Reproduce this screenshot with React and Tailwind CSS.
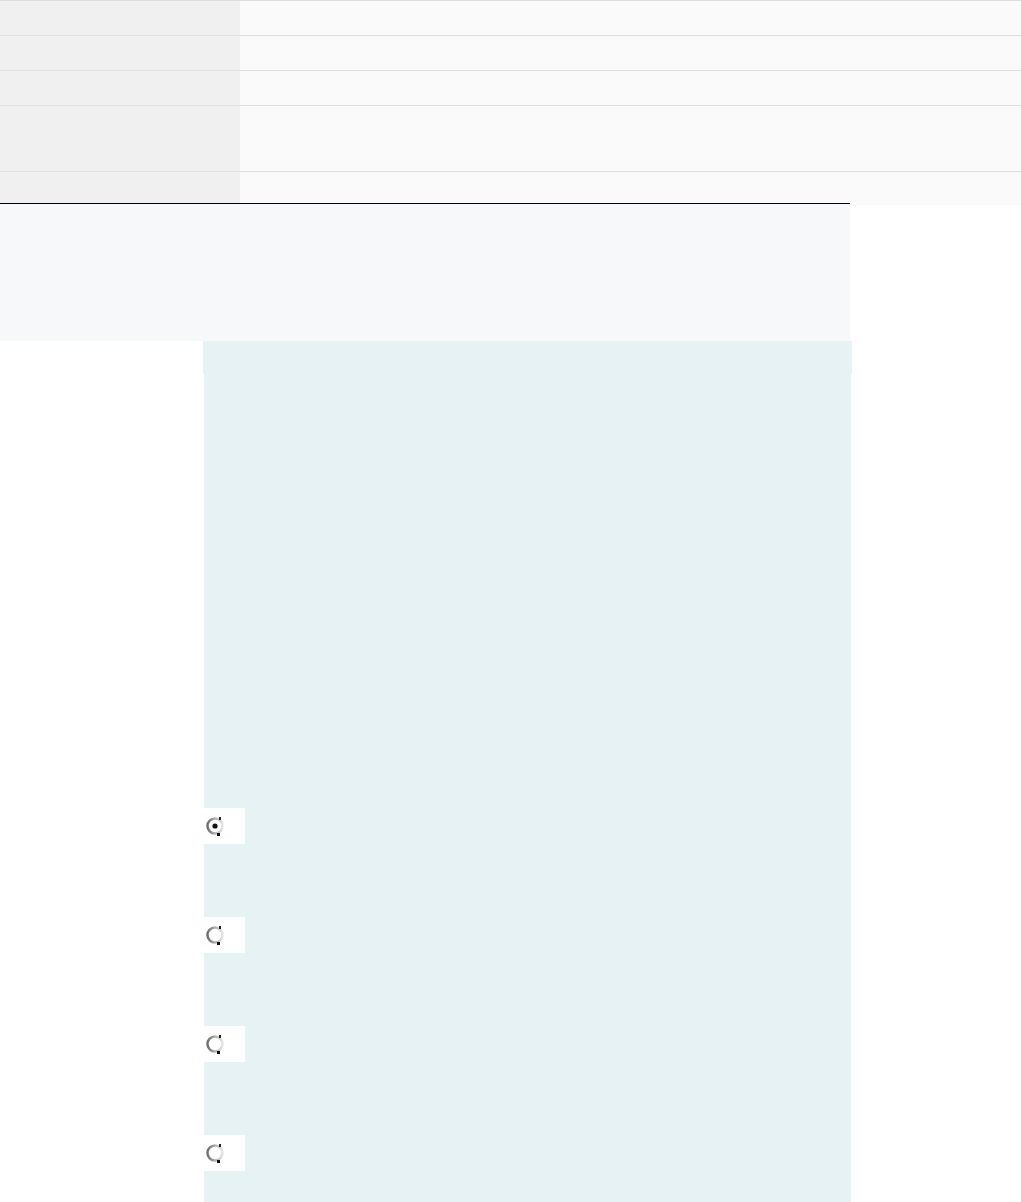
import React from 'react';

const rows = [
    { h: 'h-[35px]', border: true },
    { h: 'h-[35px]', border: true },
    { h: 'h-[35px]', border: true },
    { h: 'h-[66px]', border: true },
    { h: 'h-[33px]', border: false },
];

function RadioMark({ checked }) {
    return (
        <svg width="22" height="24" viewBox="0 0 22 24">
            <defs>
                <linearGradient id="ring" x1="0" y1="0" x2="1" y2="0">
                    <stop offset="0" stopColor="#6e6e6e" />
                    <stop offset="0.5" stopColor="#b0b0b0" />
                    <stop offset="1" stopColor="#e4e4e4" />
                </linearGradient>
            </defs>
            <circle cx="10" cy="12" r="7.5" fill="#fff" stroke="url(#ring)" strokeWidth="2.5" />
            {checked && (
                <>
                    <circle cx="10" cy="12" r="4.2" fill="#fff" />
                    <circle cx="10" cy="12" r="2.6" fill="#111" />
                </>
            )}
            <rect x="14" y="3" width="2" height="3" fill="#222" />
            <rect x="12" y="19" width="3" height="3" fill="#111" />
        </svg>
    );
}

function RadioBox({ checked }) {
    return (
        <div className="w-[41px] h-[36px] bg-white flex items-center pl-[1px]">
            <RadioMark checked={checked} />
        </div>
    );
}

export default function App() {
    return (
        <div className="w-[1021px] min-h-[1202px] bg-white" style={{ fontFamily: 'Liberation Sans, sans-serif' }}>
            {/* Info table */}
            <div className="border-t border-[#dcdde3]">
                {rows.map((r, i) => (
                    <div
                        key={i}
                        className={`flex ${r.h} ${r.border ? 'border-b border-[#e0e0e2]' : ''}`}
                    >
                        <div className="w-[240px] bg-[#f0f0f0]" />
                        <div className="flex-1 bg-[#fafafa]" />
                    </div>
                ))}
            </div>

            {/* Header band */}
            <div className="relative -mt-[2px] w-[850px] h-[138px] border-t border-black bg-[#f6f8fa]" />

            {/* Answer panel */}
            <div className="ml-[204px] w-[647px]">
                <div className="-ml-px w-[649px] h-[33px] bg-[#e6f2f4]" />
                <div className="bg-[#e6f2f4] pt-[434px] pb-[40px] flex flex-col gap-[73px]">
                    <RadioBox checked />
                    <RadioBox />
                    <RadioBox />
                    <RadioBox />
                </div>
            </div>
        </div>
    );
}
